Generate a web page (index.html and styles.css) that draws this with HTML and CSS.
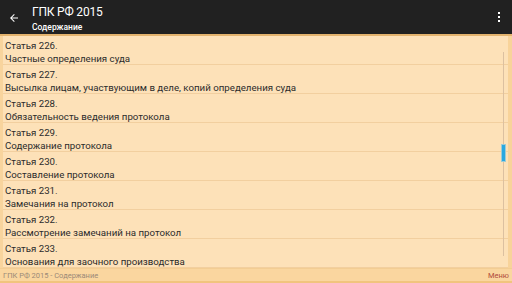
FILE: index.html
```html
<!DOCTYPE html>
<html lang="ru">

<head>
    <meta charset="UTF-8">
    <meta name="viewport" content="width=device-width, initial-scale=1.0">
    <title>ГПК РФ 2015</title>
    <link rel="stylesheet" href="styles.css">
</head>

<body>
    <div class="app">
        <!-- top bar -->
        <div class="toolbar">
            <div class="back">
                <svg width="12" height="12" viewBox="0 0 24 24">
                    <path d="M20 11H7.83l5.59-5.59L12 4l-8 8 8 8 1.41-1.41L7.83 13H20v-2z" fill="#fff" />
                </svg>
            </div>
            <div class="titles">
                <h1>ГПК РФ 2015</h1>
                <p>Содержание</p>
            </div>
            <div class="more">
                <span></span><span></span><span></span>
            </div>
        </div>

        <div class="content">
            <ul class="list">
                <li><span>Статья 226.</span><span>Частные определения суда</span></li>
                <li><span>Статья 227.</span><span>Высылка лицам, участвующим в деле, копий определения суда</span></li>
                <li><span>Статья 228.</span><span>Обязательность ведения протокола</span></li>
                <li><span>Статья 229.</span><span>Содержание протокола</span></li>
                <li><span>Статья 230.</span><span>Составление протокола</span></li>
                <li><span>Статья 231.</span><span>Замечания на протокол</span></li>
                <li><span>Статья 232.</span><span>Рассмотрение замечаний на протокол</span></li>
                <li><span>Статья 233.</span><span>Основания для заочного производства</span></li>
            </ul>
            <div class="track"></div>
            <div class="thumb"></div>
        </div>

        <div class="footer">
            <span>ГПК РФ 2015 - Содержание</span>
            <span class="menu">Меню</span>
        </div>
    </div>
</body>

</html>
```

FILE: styles.css
```css
* {
    margin: 0;
    padding: 0;
    box-sizing: border-box;
}

html,
body {
    height: 100%;
}

body {
    font-family: Roboto, "Noto Sans", sans-serif;
    background: #fde1b8;
}

.app {
    height: 100vh;
    display: flex;
    flex-direction: column;
    overflow: hidden;
}

.toolbar {
    height: 36px;
    flex: none;
    display: flex;
    align-items: center;
    background: #212121;
    border-bottom: 2px solid #e3b36e;
    color: #fff;
}

.back {
    width: 32px;
    flex: none;
    display: flex;
    justify-content: center;
    padding: 2px 4px 0 0;
}

.back svg {
    display: block;
}

.titles {
    flex: 1;
    padding-top: 4px;
}

.titles h1 {
    font-size: 12px;
    font-weight: 400;
    line-height: 14px;
    letter-spacing: -0.2px;
}

.titles p {
    font-size: 8.5px;
    font-weight: 500;
    line-height: 12px;
    margin-top: 2px;
}

.more {
    width: 26px;
    display: flex;
    flex-direction: column;
    align-items: center;
    gap: 2px;
}

.more span {
    width: 2px;
    height: 2px;
    background: #fff;
}

/* list area */
.content {
    flex: 1;
    position: relative;
    border-left: 3px solid #f8d49d;
    border-right: 4px solid #f8d39a;
}

.list {
    list-style: none;
}

.list li {
    height: 29px;
    display: flex;
    flex-direction: column;
    padding: 3px 2px 0;
    border-bottom: 1px solid #f2cf9f;
    font-size: 9.7px;
    line-height: 13px;
    color: #2b2b2b;
    white-space: nowrap;
}

.track {
    position: absolute;
    right: 4px;
    top: 16px;
    bottom: 12px;
    width: 1px;
    background: #dcc0a0;
}

.thumb {
    position: absolute;
    right: 3px;
    top: 109px;
    width: 3px;
    height: 16px;
    background: #29a8e0;
    box-shadow: 0 0 0 1px #9ccbd6;
}

.footer {
    height: 15px;
    flex: none;
    display: flex;
    align-items: center;
    justify-content: space-between;
    padding: 0 3px;
    background: #fad69f;
    border-top: 1px solid #f3cd93;
    border-bottom: 2px solid #f1c47e;
    font-size: 7.5px;
    color: #9a8a78;
}

.menu {
    color: #b04a3a;
    font-size: 7.5px;
}
```
